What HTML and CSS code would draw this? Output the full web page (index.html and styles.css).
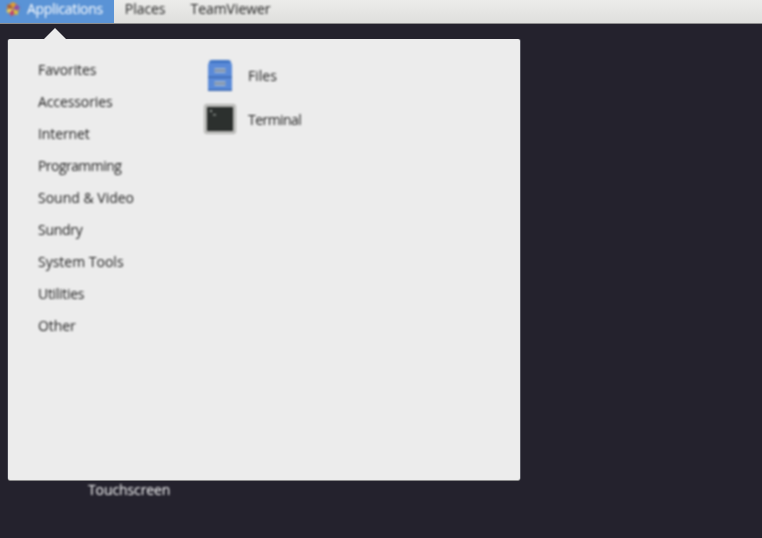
FILE: index.html
```html
<!DOCTYPE html>
<html lang="en">
<head>
<meta charset="utf-8">
<title>Applications</title>
<link rel="stylesheet" href="styles.css">
</head>
<body>
<header class="topbar">
  <div class="topitem active">
    <svg class="logo" width="16" height="16" viewBox="0 0 16 16">
      <circle cx="8" cy="8" r="6.500" fill="#a88a70"/>
      <path d="M8 1 11 3.500 8 7.500 5.500 3Z" fill="#e0a030"/>
      <path d="M15 6 12 10 8.200 7.800 11 3.500Z" fill="#8e4fa8"/>
      <path d="M13 14 9 12.500 8.200 8.200 12.500 9.500Z" fill="#d8c040"/>
      <path d="M6 15.500 5 11 7.800 8.200 9 12.500Z" fill="#c03a70"/>
      <path d="M1 11 4 7.500 7.600 8 5 11.500Z" fill="#e8d060"/>
      <path d="M2 3.500 6 4.500 7.600 7.600 3.500 7.500Z" fill="#a85a30"/>
    </svg>
    <span class="tight">Applications</span>
  </div>
  <div class="topitem">Places</div>
  <div class="topitem shift">TeamViewer</div>
</header>
<div class="desktop-label">Touchscreen</div>
<div class="popup">
  <div class="arrow"></div>
  <div class="menu">
    <ul class="categories">
      <li class="tight-less">Favorites</li>
      <li class="tight-less">Accessories</li>
      <li class="tight-less">Internet</li>
      <li class="tight-more">Programming</li>
      <li>Sound &amp; Video</li>
      <li class="tight-sm">Sundry</li>
      <li>System Tools</li>
      <li class="tight-sm">Utilities</li>
      <li class="tight-less">Other</li>
    </ul>
    <div class="apps">
      <div class="app">
        <svg class="app-icon" width="32" height="34" viewBox="0 0 32 34">
          <path d="M5 4.500Q5 2 8 2H24Q27 2 27 4.500V8H5Z" fill="#3f74c4"/>
          <rect x="4" y="5" width="24" height="28" rx="1.500" fill="#5a8ad8"/>
          <rect x="4" y="18.500" width="24" height="1.500" fill="#3b68b0"/>
          <rect x="4" y="31.500" width="24" height="1.500" fill="#3b68b0"/>
          <rect x="10.500" y="10" width="11" height="5" fill="#9fb3cc"/>
          <rect x="10.500" y="12" width="11" height="1" fill="#5e708c"/>
          <rect x="10.500" y="23" width="11" height="5" fill="#9fb3cc"/>
          <rect x="10.500" y="25" width="11" height="1" fill="#5e708c"/>
        </svg>
        <span>Files</span>
      </div>
      <div class="app">
        <svg class="app-icon" width="32" height="34" viewBox="0 0 32 34">
          <rect x="0.500" y="2.500" width="31" height="29" rx="2" fill="#c2c2c0" stroke="#a8a8a6"/>
          <rect x="3.500" y="5.500" width="25" height="23" fill="#2c302e"/>
          <rect x="3.500" y="5.500" width="25" height="23" fill="none" stroke="#1c1e1d"/>
          <rect x="6" y="8" width="2" height="2" fill="#9aa09c"/>
          <rect x="9" y="12" width="3" height="1.500" fill="#8a908c"/>
        </svg>
        <span class="tight-more">Terminal</span>
      </div>
    </div>
  </div>
</div>
</body>
</html>
```
FILE: styles.css
```css
html, body {
  margin: 0;
  height: 100%;
  overflow: hidden;
}
body {
  background: #24222d;
  font-family: "Open Sans", "Noto Sans", sans-serif;
  font-size: 14px;
  position: relative;
}
.topbar {
  display: flex;
  height: 23px;
  background: linear-gradient(#ececea, #dfdfdd);
  border-bottom: 1px solid #8e8e8e;
  color: #1e1e1e;
}
.topitem {
  display: flex;
  align-items: center;
  gap: 6px;
  padding: 0 12px 6px 11px;
  line-height: 17px;
  height: 17px;
  filter: blur(0.8px);
  letter-spacing: -0.05px;
}
.topitem.shift {
  padding-left: 13px;
}
.topitem.active {
  background: #5a93d6;
  color: #ffffff;
  padding-left: 5px;
  padding-right: 11px;
  height: 23px;
  padding-bottom: 0;
  box-sizing: border-box;
  align-items: flex-start;
  filter: none;
}
.active .tight,
.active .logo {
  filter: blur(0.8px);
}
.tight {
  letter-spacing: -0.33px;
}
.tight-less {
  letter-spacing: -0.1px;
}
.tight-sm {
  letter-spacing: -0.3px;
}
.tight-more {
  letter-spacing: -0.55px;
}
.logo {
  margin-top: 1px;
}
.desktop-label {
  position: absolute;
  left: 88px;
  top: 480px;
  color: #ffffff;
  filter: blur(0.8px);
  letter-spacing: -0.1px;
}
.popup {
  position: absolute;
  left: 8px;
  top: 39px;
  width: 512px;
  height: 441px;
  background: #ececec;
  border-radius: 2px;
  box-shadow: 0 1px 0 #8a8a8a, 1px 0 0 #55555f, -1px 0 0 #44444f;
}
.arrow {
  position: absolute;
  left: 36px;
  top: -11px;
  width: 0;
  height: 0;
  border-left: 11px solid transparent;
  border-right: 11px solid transparent;
  border-bottom: 11px solid #ececec;
}
.menu {
  display: flex;
  height: 100%;
  color: #1e1e1e;
  filter: blur(0.8px);
}
.categories {
  list-style: none;
  margin: 0;
  padding: 15px 0 0 30px;
  width: 160px;
}
.categories li {
  height: 32px;
  line-height: 31px;
}
.apps {
  display: flex;
  flex-direction: column;
  gap: 10px;
  padding: 19px 0 0 6px;
}
.app {
  display: flex;
  align-items: center;
  gap: 12px;
}
```
